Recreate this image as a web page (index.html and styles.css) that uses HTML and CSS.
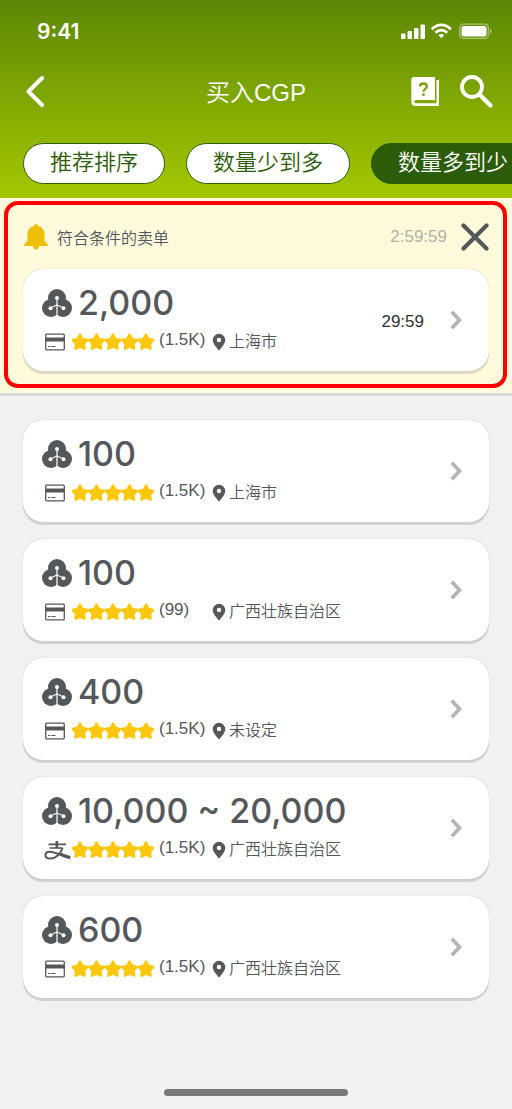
FILE: index.html
```html
<!DOCTYPE html>
<html lang="zh-CN">
<head>
<meta charset="utf-8">
<meta name="viewport" content="width=device-width, initial-scale=1">
<title>买入CGP</title>
<link rel="stylesheet" href="styles.css">
</head>
<body>
<svg class="sprite" aria-hidden="true">
  <symbol id="coin" viewBox="0 0 30 28">
    <g fill="#54585b"><circle cx="15" cy="9" r="9"/><circle cx="9" cy="19" r="9"/><circle cx="21" cy="19" r="9"/></g>
    <path d="M15 9v19M15 15.500c-1 1.800-4 1.500-6.200 3.500M15 15.500c1 1.800 4 1.500 6.200 3.500" fill="none" stroke="#fff" stroke-width="1.200"/>
    <g fill="#fff"><circle cx="15" cy="9" r="2"/><circle cx="8.500" cy="19.200" r="2"/><circle cx="21.500" cy="19.200" r="2"/></g>
  </symbol>
  <symbol id="bankcard" viewBox="0 0 30 20">
    <rect x="3.700" y="2.200" width="18.600" height="15.600" rx="1" fill="none" stroke="#54585b" stroke-width="1.300"/>
    <path d="M3.500 5.500h19v4h-19z" fill="#54585b"/>
    <path d="M6 14.500h2.500M9.500 14.500h4" stroke="#54585b" stroke-width="1.200"/>
  </symbol>
  <symbol id="alipay" viewBox="0 0 30 20">
    <g fill="none" stroke="#54585b">
      <path d="M6.500 4.300h17.500M7.500 8h13.300" stroke-width="1.700"/>
      <path d="M14.800 1v7" stroke-width="2.600"/>
      <path d="M20.500 8c-1.500 5-6 10.500-12 10.500-3 0-5-1.200-5-3.300 0-2.200 2-3.400 4.500-3.400 4.500 0 10 3.200 20 6" stroke-width="2"/>
      <path d="M18.500 14.200c3 1.200 6.200 2.300 9.700 3.400" stroke-width="3.200"/>
    </g>
  </symbol>
  <symbol id="star" viewBox="0 0 18 18">
    <path d="M9 1.500L11.500 6l4.900.9-3.400 3.800.6 5-4.600-2.100-4.600 2.100.6-5L1.600 6.900 6.500 6z" fill="#fdc70c" stroke="#fdc70c" stroke-width="2.300" stroke-linejoin="round"/>
  </symbol>
  <symbol id="stars" viewBox="0 0 82 18">
    <use href="#star" x="-1" width="18" height="18"/><use href="#star" x="15.500" width="18" height="18"/><use href="#star" x="32" width="18" height="18"/><use href="#star" x="48.500" width="18" height="18"/><use href="#star" x="65" width="18" height="18"/>
  </symbol>
  <symbol id="pin" viewBox="0 0 14 18">
    <path fill-rule="evenodd" d="M7 .8a6.300 6.300 0 0 0-6.300 6.300C.7 11.500 7 17.500 7 17.500s6.300-6 6.300-10.400A6.300 6.300 0 0 0 7 .8zM7 4.800a2.200 2.200 0 1 1 0 4.400 2.200 2.200 0 0 1 0-4.400z" fill="#54585b"/>
  </symbol>
  <symbol id="next" viewBox="0 0 12 20">
    <path d="M1.800 1.800L9.500 10l-7.700 8.200" fill="none" stroke="#b5b5b5" stroke-width="3.800"/>
  </symbol>
</svg>

<header class="header">
  <div class="status">
    <span class="clock">9:41</span>
    <svg width="92" height="18" viewBox="0 0 92 18" aria-hidden="true">
      <g fill="#fff"><rect x="1" y="11.500" width="4.500" height="5.500" rx="1"/><rect x="7.500" y="9" width="4.500" height="8" rx="1"/><rect x="14" y="6" width="4.500" height="11" rx="1"/><rect x="20.500" y="2.500" width="4.500" height="14.500" rx="1"/></g>
      <g fill="none" stroke="#fff" stroke-width="2.800"><path d="M31.800 7.300c5.500-6 13.500-6 19 0"/><path d="M35.400 10.800c3.600-3.500 8.200-3.500 11.800 0"/></g>
      <path d="M38.400 13.100c1.800-1.400 4-1.400 5.800 0l-2.900 3.100z" fill="#fff"/>
      <rect x="59.700" y="2.200" width="28.600" height="14.100" rx="3.500" fill="none" stroke="#fff" stroke-opacity=".45" stroke-width="1.300"/>
      <rect x="61.500" y="4" width="25" height="10.500" rx="2" fill="#fff"/>
      <path d="M90 6.800c2 .8 2 4.200 0 5z" fill="#fff" fill-opacity=".5"/>
    </svg>
  </div>
  <nav class="nav">
    <button class="icon-button back" type="button" aria-label="返回">
      <svg width="20" height="34" viewBox="0 0 20 34"><path d="M18 3L4.500 16.500 18 30" fill="none" stroke="#fff" stroke-width="4" stroke-linecap="round" stroke-linejoin="round"/></svg>
    </button>
    <h1 class="title">买入CGP</h1>
    <div class="actions">
      <button class="icon-button" type="button" aria-label="帮助">
        <svg width="28" height="30" viewBox="0 0 28 30">
          <path d="M3 0h21v23H5c-2.300 0-2.300 3.200 0 3.200h20.500V3H28v26H4.500C1.500 29 .3 27 .3 25V3Q.3 0 3 0z" fill="#fff"/>
          <path d="M9 9.500c0-4 6.800-4 6.800 0 0 2.700-3.400 2.600-3.400 5.200" fill="none" stroke="#7ca000" stroke-width="2.300"/><rect x="11.200" y="16.400" width="2.500" height="2.500" fill="#7ca000"/>
        </svg>
      </button>
      <button class="icon-button" type="button" aria-label="搜索">
        <svg width="34" height="34" viewBox="0 0 34 34"><circle cx="12" cy="12" r="10" fill="none" stroke="#fff" stroke-width="3.800"/><path d="M19.500 19.500L30.500 30.500" stroke="#fff" stroke-width="4.200" stroke-linecap="round"/></svg>
      </button>
    </div>
  </nav>
  <div class="sorts">
    <button class="pill" type="button">推荐排序</button>
    <button class="pill" type="button">数量少到多</button>
    <button class="pill pill-active" type="button" aria-pressed="true">数量多到少</button>
  </div>
</header>

<main>
  <section class="alert">
    <div class="highlight">
      <div class="alert-head">
        <svg width="26" height="28" viewBox="0 0 26 28" aria-hidden="true"><path d="M13 1c1.300 0 2 .8 2 2 4.300 1 6.500 4 6.500 8v6.500c0 1.700 3.500 2.800 3.500 5.500H1c0-2.700 3.500-3.800 3.500-5.500V11c0-4 2.200-7 6.500-8 0-1.200.7-2 2-2z" fill="#efbf04"/><path d="M10 23h6c0 4.500-6 4.500-6 0z" fill="#efbf04"/></svg>
        <h2 class="alert-title">符合条件的卖单</h2>
        <span class="countdown">2:59:59</span>
        <button class="icon-button" type="button" aria-label="关闭">
          <svg width="28" height="28" viewBox="0 0 28 28"><path d="M2.500 2.500l23 23M25.500 2.500l-23 23" stroke="#54585b" stroke-width="4.200" stroke-linecap="round"/></svg>
        </button>
      </div>
      <a class="card" href="#order-2000">
        <div class="info">
          <div class="amount"><svg class="coin"><use href="#coin"/></svg>2,000</div>
          <div class="meta"><svg class="pay"><use href="#bankcard"/></svg><svg class="stars"><use href="#stars"/></svg><span class="count">(1.5K)</span><svg class="pin"><use href="#pin"/></svg><span class="place">上海市</span></div>
        </div>
        <span class="timer">29:59</span>
        <svg class="next"><use href="#next"/></svg>
      </a>
    </div>
  </section>

  <section class="orders">
    <a class="card" href="#order-1">
      <div class="info">
        <div class="amount"><svg class="coin"><use href="#coin"/></svg>100</div>
        <div class="meta"><svg class="pay"><use href="#bankcard"/></svg><svg class="stars"><use href="#stars"/></svg><span class="count">(1.5K)</span><svg class="pin"><use href="#pin"/></svg><span class="place">上海市</span></div>
      </div>
      <svg class="next"><use href="#next"/></svg>
    </a>
    <a class="card" href="#order-2">
      <div class="info">
        <div class="amount"><svg class="coin"><use href="#coin"/></svg>100</div>
        <div class="meta"><svg class="pay"><use href="#bankcard"/></svg><svg class="stars"><use href="#stars"/></svg><span class="count">(99)</span><svg class="pin"><use href="#pin"/></svg><span class="place">广西壮族自治区</span></div>
      </div>
      <svg class="next"><use href="#next"/></svg>
    </a>
    <a class="card" href="#order-3">
      <div class="info">
        <div class="amount"><svg class="coin"><use href="#coin"/></svg>400</div>
        <div class="meta"><svg class="pay"><use href="#bankcard"/></svg><svg class="stars"><use href="#stars"/></svg><span class="count">(1.5K)</span><svg class="pin"><use href="#pin"/></svg><span class="place">未设定</span></div>
      </div>
      <svg class="next"><use href="#next"/></svg>
    </a>
    <a class="card" href="#order-4">
      <div class="info">
        <div class="amount"><svg class="coin"><use href="#coin"/></svg>10,000 ~ 20,000</div>
        <div class="meta"><svg class="pay"><use href="#alipay"/></svg><svg class="stars"><use href="#stars"/></svg><span class="count">(1.5K)</span><svg class="pin"><use href="#pin"/></svg><span class="place">广西壮族自治区</span></div>
      </div>
      <svg class="next"><use href="#next"/></svg>
    </a>
    <a class="card" href="#order-5">
      <div class="info">
        <div class="amount"><svg class="coin"><use href="#coin"/></svg>600</div>
        <div class="meta"><svg class="pay"><use href="#bankcard"/></svg><svg class="stars"><use href="#stars"/></svg><span class="count">(1.5K)</span><svg class="pin"><use href="#pin"/></svg><span class="place">广西壮族自治区</span></div>
      </div>
      <svg class="next"><use href="#next"/></svg>
    </a>
  </section>
</main>
<footer class="home"><div class="home-bar"></div></footer>
</body>
</html>
```

FILE: styles.css
```css
* {
  box-sizing: border-box;
}

body {
  margin: 0;
  min-height: 100vh;
  display: flex;
  flex-direction: column;
  background: #f1f1f1;
  color: #54585b;
  font-family: "Liberation Sans", "Noto Sans CJK SC", sans-serif;
  font-size: 16px;
  overflow-x: hidden;
}

svg {
  display: block;
  flex: none;
}

.sprite {
  position: absolute;
  width: 0;
  height: 0;
}

button {
  font: inherit;
  cursor: pointer;
}

.icon-button {
  padding: 0;
  border: 0;
  background: none;
}

.header {
  padding-bottom: 14px;
  background: linear-gradient(#5c8705, #a4c800);
  color: #fff;
}

.status {
  display: flex;
  align-items: center;
  justify-content: space-between;
  height: 62px;
  padding: 0 20px 0 37px;
}

.clock {
  font-family: Inter, sans-serif;
  font-size: 21px;
  font-weight: 600;
}

.nav {
  display: grid;
  grid-template-columns: 1fr auto 1fr;
  align-items: center;
  height: 60px;
  padding: 0 18px;
}

.back {
  justify-self: start;
  padding-left: 6px;
}

.title {
  margin: 0;
  padding-bottom: 4px;
  font-size: 24px;
  font-weight: 350;
}

.actions {
  display: flex;
  align-items: center;
  justify-content: flex-end;
  gap: 21px;
}

.sorts {
  display: flex;
  gap: 21px;
  margin-top: 21px;
  padding-left: 23px;
  overflow: hidden;
}

.pill {
  flex: none;
  height: 41px;
  padding: 0 26px 2px;
  border: 1px solid #2d5c08;
  border-radius: 21px;
  background: #fff;
  color: #2d5c08;
  font-size: 22px;
  font-weight: 350;
  line-height: 32px;
  white-space: nowrap;
}

.pill-active {
  background: #2d5c08;
  color: #fff;
}

.alert {
  padding: 3px 5px 5px 4px;
  border-bottom: 3px solid #d9d7d8;
  background: #fffadc;
}

.highlight {
  padding: 10px 14px 13px 15px;
  border: 4px solid #f00;
  border-radius: 14px;
}

.alert-head {
  display: flex;
  align-items: center;
  height: 44px;
  margin-bottom: 10px;
}

.alert-title {
  flex: 1;
  margin: 0 0 0 8px;
  font-size: 16px;
  font-weight: 350;
}

.countdown {
  margin-right: 14px;
  color: #b3b1a4;
  font-size: 17px;
}

.orders {
  display: flex;
  flex-direction: column;
  gap: 17px;
  padding: 24px 23px;
}

.card {
  display: flex;
  align-items: center;
  min-height: 102px;
  padding: 0 27px 0 19px;
  border-radius: 20px;
  background: #fff;
  box-shadow: 0 0 1px rgba(0, 0, 0, 0.3), 0 3px 0 rgba(0, 0, 0, 0.12);
  color: inherit;
  text-decoration: none;
}

.info {
  flex: 1;
  padding-bottom: 4px;
}

.amount {
  display: flex;
  align-items: center;
  gap: 6px;
  font-family: Inter, sans-serif;
  font-size: 34px;
  font-weight: 500;
  line-height: 40px;
  white-space: nowrap;
}

.coin {
  width: 30px;
  height: 28px;
}

.meta {
  display: grid;
  grid-template-columns: 30px 82px 58px 14px auto;
  justify-content: start;
  align-items: center;
  height: 22px;
  margin-top: 8px;
}

.pay {
  width: 30px;
  height: 20px;
}

.stars {
  width: 82px;
  height: 18px;
}

.count {
  align-self: start;
  padding-left: 5px;
  font-size: 17px;
  line-height: 18px;
}

.pin {
  width: 14px;
  height: 18px;
}

.place {
  padding-left: 3px;
  font-weight: 350;
  line-height: 22px;
}

.timer {
  margin-right: 26px;
  padding-top: 4px;
  color: #333;
  font-size: 17px;
}

.next {
  width: 12px;
  height: 20px;
}

.home {
  display: flex;
  justify-content: center;
  margin-top: auto;
  padding-bottom: 13px;
}

.home-bar {
  width: 36%;
  height: 7px;
  border-radius: 4px;
  background: #7a7a7a;
}
```
